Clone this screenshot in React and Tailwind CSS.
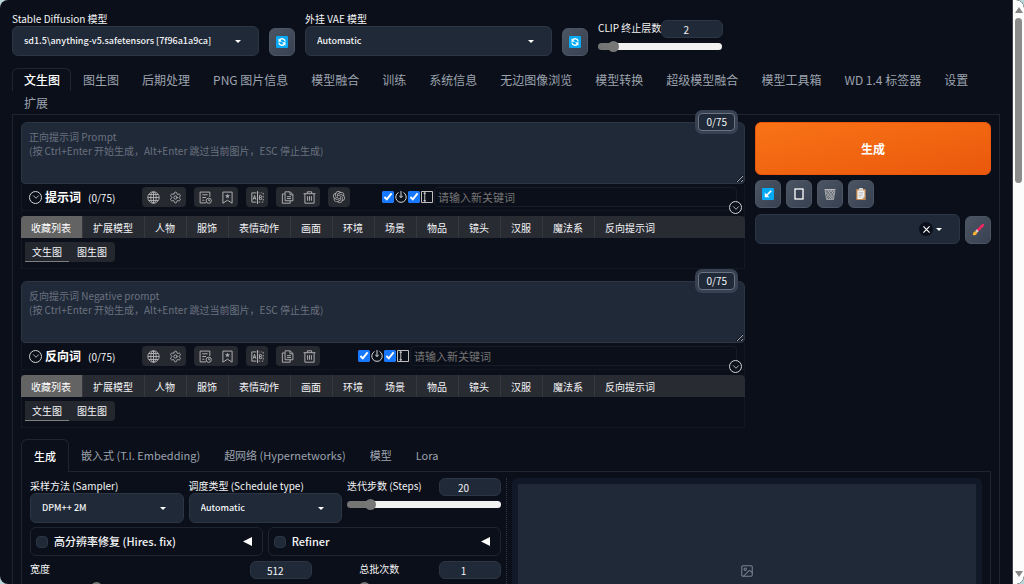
import { ChevronDown, Image as ImageIcon, Settings } from 'lucide-react';
import { SiOpenai } from 'react-icons/si';
import clsx from 'clsx';

const NAV_TABS = [
  '文生图', '图生图', '后期处理', 'PNG 图片信息', '模型融合', '训练', '系统信息',
  '无边图像浏览', '模型转换', '超级模型融合', '模型工具箱', 'WD 1.4 标签器', '设置', '扩展',
];

const GROUP_TABS = [
  '收藏列表', '扩展模型', '人物', '服饰', '表情动作', '画面', '环境',
  '场景', '物品', '镜头', '汉服', '魔法系', '反向提示词',
];

const EXTRA_TABS = ['生成', '嵌入式 (T.I. Embedding)', '超网络 (Hypernetworks)', '模型', 'Lora'];

/* ---------- icons ---------- */

function Svg({ children, className = 'size-[13px]' }) {
  return (
    <svg viewBox="0 0 24 24" className={className} fill="none" stroke="currentColor" strokeWidth="1.8" aria-hidden="true">
      {children}
    </svg>
  );
}

const GlobeIcon = () => (
  <Svg>
    <circle cx="12" cy="12" r="10.5" />
    <ellipse cx="12" cy="12" rx="5" ry="10.5" />
    <path d="M12 1.5v21M1.5 12h21M3.2 6.5h17.6M3.2 17.5h17.6" />
  </Svg>
);

const HistoryIcon = () => (
  <Svg>
    <path d="M20 11V2H2v20h11M6 7h10M6 12h7M6 17h4" />
    <circle cx="18" cy="18" r="4.8" />
    <path d="M18 15v3h2.5" />
  </Svg>
);

const FavoriteIcon = () => (
  <Svg>
    <path d="M3.5 2h17v20.5L12 17l-8.500 5.500z" />
    <path fill="currentColor" strokeWidth="1" d="m12 6 1 2.300 2.500.2-1.900 1.600.6 2.400-2.200-1.300-2.200 1.300.6-2.400-1.900-1.600 2.500-.2z" />
  </Svg>
);

const TranslateIcon = () => (
  <Svg>
    <path d="M10 3.500H1.500v17H10M14 3.500h1.500M18 3.500h1.500M22.500 3.500v3M22.500 9v3M22.500 14.500v3M22.500 20.500H20M17 20.500h-3M12 0v24" />
    <path d="m4 16 2.500-8L9 16M5 13.500h3M15.500 8v8h2.500c2.500 0 2.500-4 0-4h-2.500M18 12c2 0 2-4 0-4h-2.500" />
  </Svg>
);

const CopyIcon = () => (
  <Svg>
    <path d="M7.500 1.500h9.500l5 5V18H7.500zM16.500 2v5H22M11 10.500h7.500M11 14h7.500" />
    <path d="M7 5.500H2.500v17H17V18.500" />
  </Svg>
);

const TrashIcon = () => (
  <Svg>
    <path d="M1 5h22M8 5V1.500h8V5M3.500 5v17.500h17V5M8.500 9.500V18M12 9.500V18M15.500 9.500V18" />
  </Svg>
);

const ClockIcon = () => (
  <Svg className="size-3 text-neutral-300">
    <path d="M7 3A10.500 10.500 0 1 0 17 3" strokeWidth="2" />
    <path d="M12 0v13M8.500 10l3.500 3 3.500-3" strokeWidth="2" />
  </Svg>
);

const PanelIcon = () => (
  <Svg className="size-3 text-neutral-300">
    <path d="M1 1h22v22H1zM7.500 2v20M5 4.500h5M5 19.500h5" />
  </Svg>
);

const RefreshIcon = () => (
  <svg viewBox="0 0 24 24" className="size-3" aria-hidden="true">
    <rect width="24" height="24" rx="2" fill="#03a9f4" />
    <g fill="none" stroke="#fff" strokeWidth="2.600">
      <path d="M18.500 11a6.500 6.500 0 0 0-11.500-3M5.500 13a6.500 6.500 0 0 0 11.500 3" />
    </g>
    <path fill="#fff" d="M5 4.500v7h7zM19 19.500v-7h-7z" />
  </svg>
);

const ArrowIcon = () => (
  <svg viewBox="0 0 24 24" className="size-3" aria-hidden="true">
    <rect width="24" height="24" rx="2" fill="#03a9f4" />
    <path d="M18.500 5.500 9 15" stroke="#fff" strokeWidth="3.400" />
    <path fill="#fff" d="M5.500 9v9.500H15z" />
  </svg>
);

const CardIcon = () => (
  <svg viewBox="0 0 24 24" className="size-3" aria-hidden="true">
    <rect x="4" y="2" width="16" height="20" fill="#374151" stroke="#fff" strokeWidth="2.600" />
  </svg>
);

const BasketIcon = () => (
  <svg viewBox="0 0 24 24" className="size-3" aria-hidden="true">
    <path fill="#5f6670" stroke="#b6b6b6" strokeWidth="1.500" d="M2 3h20l-3 20H5z" />
    <path fill="none" stroke="#c9c9c9" strokeWidth="1.200" d="M1 3h22M3 8l4-5 12 19M5 18 16 3l5 6M3.500 12l9-9 8 11M6 22 20 6M10 22l10-9M4 9l12 13" />
  </svg>
);

const ClipboardIcon = () => (
  <svg viewBox="0 0 24 24" className="size-3" aria-hidden="true">
    <rect x="2.500" y="2" width="19" height="22" rx="1.500" fill="#c68a52" />
    <path fill="#f1f1f1" d="M5 5h14v12l-4 5H5z" />
    <path fill="#c9c9d1" d="M19 17h-4v5z" />
    <rect x="8" y="0" width="8" height="5" rx="1" fill="#d6d6d6" />
    <path d="M7.500 9h9M7.500 12h9M7.500 15h7M7.500 18h5" stroke="#a9a9b3" strokeWidth="1.200" />
  </svg>
);

const BrushIcon = () => (
  <svg viewBox="0 0 24 24" className="size-3" aria-hidden="true">
    <path d="M22 2 11 13" stroke="#f0265e" strokeWidth="5" strokeLinecap="round" />
    <path d="m11.500 12.500-3 3" stroke="#cfd8dc" strokeWidth="5" />
    <path fill="#fbb034" d="M1 22c1.500-1 .5-4 2.500-6 2-2 5-1.500 6 0 1.200 2 .5 4-1.500 5.300-2 1.200-5 1.200-7 .7z" />
  </svg>
);

const CaretIcon = ({ className }) => (
  <svg viewBox="0 0 8 4" className={clsx('h-[3px] w-1.5', className)} aria-hidden="true">
    <path d="M0 0h8L4 4z" fill="#fff" />
  </svg>
);

function CircleChevron() {
  return (
    <span className="flex size-[13px] items-center justify-center rounded-full border border-neutral-300 text-neutral-300">
      <ChevronDown className="size-2.5" strokeWidth={2} />
    </span>
  );
}

/* ---------- form controls ---------- */

function Dropdown({ id, label, value, className }) {
  return (
    <div className={className}>
      <label htmlFor={id} className="block text-[10px] leading-[15px] whitespace-nowrap text-gray-100">{label}</label>
      <div className="relative">
        <select
          id={id}
          className="block h-[30px] w-full appearance-none rounded-md border border-[#2b3544] bg-[#1f2937] px-[11px] text-[9px] font-medium text-gray-100 outline-none"
        >
          <option>{value}</option>
        </select>
        <CaretIcon className="pointer-events-none absolute top-3.5 right-[18px]" />
      </div>
    </div>
  );
}

function ToolButton({ label, children }) {
  return (
    <button
      type="button"
      aria-label={label}
      className="flex h-7 w-[26px] shrink-0 items-center justify-center rounded-md border border-[#4b5563] bg-gradient-to-br from-[#4b5563] to-[#374151]"
    >
      {children}
    </button>
  );
}

function Slider({ id, label, value, min, max, className }) {
  const percent = ((value - min) / (max - min)) * 100;
  const track = `linear-gradient(to right, #757575 ${percent}%, #f1f1f1 ${percent}%)`;

  return (
    <div className={clsx('flex flex-col gap-[3px]', className)}>
      <div className="flex justify-between">
        <label htmlFor={id} className="text-[10px] leading-[15px] whitespace-nowrap text-gray-100">{label}</label>
        <input
          aria-label={label}
          defaultValue={value}
          className="h-[18px] w-[62px] rounded-md border border-[#2b3544] bg-[#1f2937] pr-3 text-center text-[10px] text-gray-100 outline-none"
        />
      </div>
      <input
        id={id}
        type="range"
        min={min}
        max={max}
        defaultValue={value}
        style={{ '--track': track }}
        className="h-[11px] w-full appearance-none bg-transparent [&::-webkit-slider-runnable-track]:h-[7px] [&::-webkit-slider-runnable-track]:rounded-full [&::-webkit-slider-runnable-track]:bg-(image:--track) [&::-webkit-slider-thumb]:-mt-0.5 [&::-webkit-slider-thumb]:size-[11px] [&::-webkit-slider-thumb]:appearance-none [&::-webkit-slider-thumb]:rounded-full [&::-webkit-slider-thumb]:bg-[#777]"
      />
    </div>
  );
}

function AccordionItem({ label }) {
  return (
    <div className="flex h-[29px] flex-1 items-center justify-between rounded-md border border-[#1f2530] pr-2.5 pl-[5px]">
      <label className="flex items-center gap-1.5 text-[11px] font-medium whitespace-nowrap text-gray-100">
        <input type="checkbox" className="size-3 appearance-none rounded-sm border border-[#2b3544] bg-[#1f2937]" />
        {label}
      </label>
      <button type="button" aria-label={`展开 ${label}`}>
        <svg viewBox="0 0 8 8" className="size-[9px]"><path d="M8 0v8L0 4z" fill="#fff" /></svg>
      </button>
    </div>
  );
}

/* ---------- prompt block ---------- */

function IconGroup({ items }) {
  return (
    <div className="flex h-5 rounded bg-[#272931] text-[#b0b0b0]">
      {items.map(([label, icon]) => (
        <button key={label} type="button" aria-label={label} className="flex w-[22px] items-center justify-center">
          {icon}
        </button>
      ))}
    </div>
  );
}

function PromptBlock({ id, title, placeholder, withAi }) {
  return (
    <section className="relative">
      <div className="absolute -top-[9px] right-2.5 z-10 rounded border border-[#6b7280] bg-[#1f2937] px-[7px] text-[10px] leading-4 text-gray-100 ring-3 ring-[#374151]">
        0/75
      </div>
      <textarea
        aria-label={title}
        placeholder={`${placeholder}\n(按 Ctrl+Enter 开始生成，Alt+Enter 跳过当前图片，ESC 停止生成)`}
        className="block h-[62px] w-full rounded-md rounded-b-sm border border-[#2b3544] bg-[#1f2937] px-[7px] py-[7px] text-[10px] leading-[14px] text-gray-100 outline-none placeholder:text-[#6b7280]"
      />

      <div className="border-x border-b border-dotted border-[#1b212c]">
        <div className="relative flex h-[27px] items-center border-b border-dotted border-[#171c26] pl-[7px]">
          <button type="button" aria-label={`折叠${title}`}><CircleChevron /></button>
          <span className="ml-[3px] text-xs font-bold text-white">{title}</span>
          <span className="ml-[7px] w-[54px] text-[10px] text-gray-100">(0/75)</span>
          <div className="flex gap-2">
            <IconGroup items={[['语言', <GlobeIcon />], ['设置', <Settings className="size-[13px]" strokeWidth={1.8} />]]} />
            <IconGroup items={[['历史', <HistoryIcon />], ['收藏', <FavoriteIcon />]]} />
            <IconGroup items={[['翻译', <TranslateIcon />]]} />
            <IconGroup items={[['复制', <CopyIcon />], ['清空', <TrashIcon />]]} />
            {withAi && <IconGroup items={[['ChatGPT', <SiOpenai className="size-3" />]]} />}
          </div>
          <div className={clsx('mr-[7px] flex flex-1 items-center gap-px', withAi ? 'ml-8' : 'ml-[38px]')}>
            <input type="checkbox" defaultChecked aria-label="自动加载" className="size-3 accent-[#1677ff]" />
            <ClockIcon />
            <input type="checkbox" defaultChecked aria-label="显示面板" className="size-3 accent-[#1677ff]" />
            <PanelIcon />
            <input
              id={id}
              aria-label="请输入新关键词"
              placeholder="请输入新关键词"
              className="h-5 min-w-0 flex-1 rounded-sm border border-[#171b25] bg-transparent px-[3px] text-[11px] text-gray-100 outline-none placeholder:text-[#757575]"
            />
          </div>
          <button type="button" aria-label="展开关键词" className="absolute top-[17px] right-0.5"><CircleChevron /></button>
        </div>

        <div className="-mx-px mt-[5px] flex h-[22px] overflow-hidden rounded-t bg-[#292b33] text-[10px] text-gray-100">
          {GROUP_TABS.map((tab, i) => (
            <button
              key={tab}
              type="button"
              className={clsx(
                'pr-[11px] pl-2.5 whitespace-nowrap',
                i < GROUP_TABS.length - 1 && 'border-r border-[#363840]',
                i === 0 && 'bg-[#636363] text-white',
              )}
            >
              {tab}
            </button>
          ))}
        </div>
        <div className="flex px-[3px] pt-1 pb-1.5 text-[10px] text-gray-100">
          <button type="button" className="h-5 border-b border-[#808080] bg-[#25272f] px-[7px]">文生图</button>
          <button type="button" className="h-5 rounded-r-sm border-b border-[#25272f] bg-[#25272f] px-2">图生图</button>
        </div>
      </div>
    </section>
  );
}

/* ---------- page sections ---------- */

function TopBar() {
  return (
    <div className="flex items-end gap-2.5">
      <Dropdown id="checkpoint" label="Stable Diffusion 模型" value="sd1.5\anything-v5.safetensors [7f96a1a9ca]" className="w-1/4" />
      <ToolButton label="刷新模型"><RefreshIcon /></ToolButton>
      <Dropdown id="vae" label="外挂 VAE 模型" value="Automatic" className="w-1/4" />
      <ToolButton label="刷新 VAE"><RefreshIcon /></ToolButton>
      <div className="w-1/8 pb-1">
        <Slider id="clip" label="CLIP 终止层数" value={2} min={1} max={12} />
      </div>
    </div>
  );
}

function ActionColumn() {
  return (
    <aside className="w-59 shrink-0">
      <button type="button" className="h-[53px] w-full rounded-md border border-[#ea580c] bg-gradient-to-br from-[#f97316] to-[#ea580c] text-xs font-bold text-white">
        生成
      </button>
      <div className="mt-[5px] flex gap-[5px]">
        <ToolButton label="读取参数"><ArrowIcon /></ToolButton>
        <ToolButton label="附加网络"><CardIcon /></ToolButton>
        <ToolButton label="清空提示词"><BasketIcon /></ToolButton>
        <ToolButton label="应用样式"><ClipboardIcon /></ToolButton>
      </div>
      <div className="mt-1.5 flex items-end gap-[5px]">
        <div className="relative flex-1">
          <select aria-label="样式" className="block h-[30px] w-full appearance-none rounded-md border border-[#2b3544] bg-[#1f2937] outline-none">
            <option value="" />
          </select>
          <button type="button" aria-label="清除" className="absolute top-2 right-[27px] flex size-[14px] items-center justify-center rounded-full bg-[#0b0f19]">
            <svg viewBox="0 0 8 8" className="size-[7px]"><path d="m.5.5 7 7m0-7-7 7" stroke="#fff" strokeWidth="1.300" /></svg>
          </button>
          <CaretIcon className="pointer-events-none absolute top-3.5 right-[18px]" />
        </div>
        <ToolButton label="编辑样式"><BrushIcon /></ToolButton>
      </div>
    </aside>
  );
}

function GenerationSettings() {
  return (
    <div className="flex min-w-0 flex-1 flex-col gap-1">
      <div className="flex gap-[5px]">
        <Dropdown id="sampler" label="采样方法 (Sampler)" value="DPM++ 2M" className="flex-1" />
        <Dropdown id="schedule" label="调度类型 (Schedule type)" value="Automatic" className="flex-1" />
        <Slider id="steps" label="迭代步数 (Steps)" value={20} min={1} max={150} className="flex-1" />
      </div>
      <div className="flex gap-[5px]">
        <AccordionItem label="高分辨率修复 (Hires. fix)" />
        <AccordionItem label="Refiner" />
      </div>
      <div className="flex justify-between pt-px">
        <Slider id="width" label="宽度" value={512} min={64} max={2048} className="w-3/5" />
        <Slider id="batch" label="总批次数" value={1} min={1} max={100} className="w-3/10" />
      </div>
    </div>
  );
}

function ScrollRail() {
  return (
    <div className="flex w-3 shrink-0 flex-col items-center justify-between rounded-r-lg border-l border-[#3c4048] bg-[#fcfcfc] py-[7px]">
      <svg viewBox="0 0 8 6" className="h-1.5 w-2"><path d="M4 0l4 6H0z" fill="#858585" /></svg>
      <div className="mt-[5px] mb-auto h-[29%] w-[7px] rounded-full bg-[#8b8b8b]" />
      <svg viewBox="0 0 8 6" className="h-1.5 w-2"><path d="M0 0h8L4 6z" fill="#858585" /></svg>
    </div>
  );
}

export default function App() {
  return (
    <div className="h-screen overflow-hidden bg-[#b9d6d8] font-['Noto_Sans_CJK_SC',sans-serif] text-gray-100">
      <div className="flex h-full overflow-hidden rounded-lg bg-[#0b0f19]">
        <main className="min-w-0 flex-1 overflow-hidden px-3 pt-[11px]">
          <TopBar />

          <nav className="mt-3 flex flex-wrap">
            {NAV_TABS.map((tab, i) => (
              <button
                key={tab}
                type="button"
                className={clsx(
                  'h-[23px] rounded-t-md border border-b-0 pr-2.5 pl-[11px] text-xs whitespace-nowrap',
                  i === 0 ? 'border-[#1f2530] font-medium text-white' : 'border-transparent text-[#9ca3af]',
                )}
              >
                {tab}
              </button>
            ))}
          </nav>

          <div className="border border-[#1f2530] px-2 pt-[7px]">
            <div className="flex gap-2.5">
              <div className="flex min-w-0 flex-1 flex-col gap-3">
                <PromptBlock id="keyword" title="提示词" placeholder="正向提示词 Prompt" withAi />
                <PromptBlock id="negative-keyword" title="反向词" placeholder="反向提示词 Negative prompt" />
              </div>
              <ActionColumn />
            </div>

            {/* Generation tabs */}
            <div className="mt-[11px] flex">
              {EXTRA_TABS.map((tab, i) => (
                <button
                  key={tab}
                  type="button"
                  className={clsx(
                    'rounded-t-md border border-b-0 text-[11px] whitespace-nowrap',
                    i === 0
                      ? 'relative -mb-px h-[33px] border-[#1f2530] bg-[#0b0f19] px-3 font-medium text-white'
                      : 'h-8 border-transparent px-[11px] text-[#9ca3af]',
                  )}
                >
                  {tab}
                </button>
              ))}
            </div>
            <div className="flex items-start gap-[5px] border border-[#1f2530] px-2 py-1.5">
              <GenerationSettings />
              <div className="self-stretch border-l border-dotted border-[#2b3544]" />
              <div className="min-w-0 flex-1">
                <div className="rounded-md bg-[#111827] p-1.5">
                  <div className="flex h-[174px] items-center justify-center bg-[#1f2937]">
                    <ImageIcon className="size-[14px] text-[#7b838f]" strokeWidth={1.8} />
                  </div>
                </div>
              </div>
            </div>
          </div>
        </main>
        <ScrollRail />
      </div>
    </div>
  );
}
